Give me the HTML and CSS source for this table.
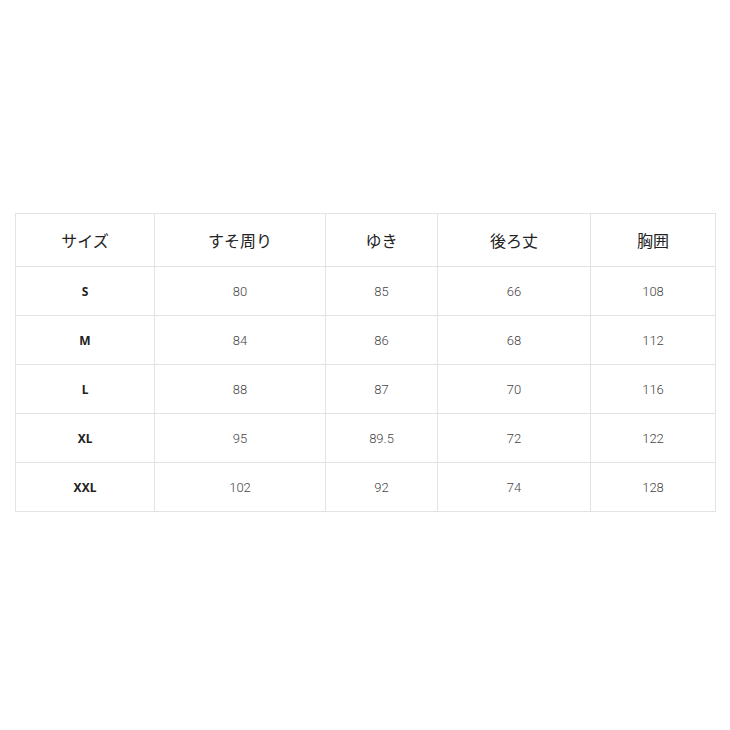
FILE: index.html
```html
<!DOCTYPE html>
<html lang="ja">
<head>
<meta charset="utf-8">
<link rel="stylesheet" href="styles.css">
</head>
<body>
<div class="page">
<table class="size-table">
<colgroup>
<col class="c1"><col class="c2"><col class="c3"><col class="c4"><col class="c5">
</colgroup>
<thead>
<tr><th>サイズ</th><th>すそ周り</th><th>ゆき</th><th>後ろ丈</th><th>胸囲</th></tr>
</thead>
<tbody>
<tr><td class="sz">S</td><td>80</td><td>85</td><td>66</td><td>108</td></tr>
<tr><td class="sz">M</td><td>84</td><td>86</td><td>68</td><td>112</td></tr>
<tr><td class="sz">L</td><td>88</td><td>87</td><td>70</td><td>116</td></tr>
<tr><td class="sz">XL</td><td>95</td><td>89.5</td><td>72</td><td>122</td></tr>
<tr><td class="sz">XXL</td><td>102</td><td>92</td><td>74</td><td>128</td></tr>
</tbody>
</table>
</div>
</body>
</html>
```
FILE: styles.css
```css
html, body {
  margin: 0;
  padding: 0;
  background: #fff;
}
.page {
  padding: 213px 0 0 15px;
}
.size-table {
  border-collapse: collapse;
  table-layout: fixed;
  width: 700px;
  font-family: "Noto Sans CJK JP", "Noto Sans", sans-serif;
}
.c1 { width: 139px; }
.c2 { width: 171px; }
.c3 { width: 112px; }
.c4 { width: 153px; }
.c5 { width: 125px; }
.size-table th,
.size-table td {
  border: 1px solid #e3e3e3;
  text-align: center;
  padding: 0;
}
.size-table th {
  height: 52px;
  font-size: 16px;
  font-weight: 400;
  color: #222;
}
.size-table td {
  height: 48px;
  font-family: "Roboto", "Noto Sans", sans-serif;
  font-weight: 300;
  font-size: 13px;
  color: #444;
}
.size-table td.sz {
  font-family: "Noto Sans", "Liberation Sans", sans-serif;
  font-weight: 700;
  font-size: 12px;
  color: #222;
}
```
